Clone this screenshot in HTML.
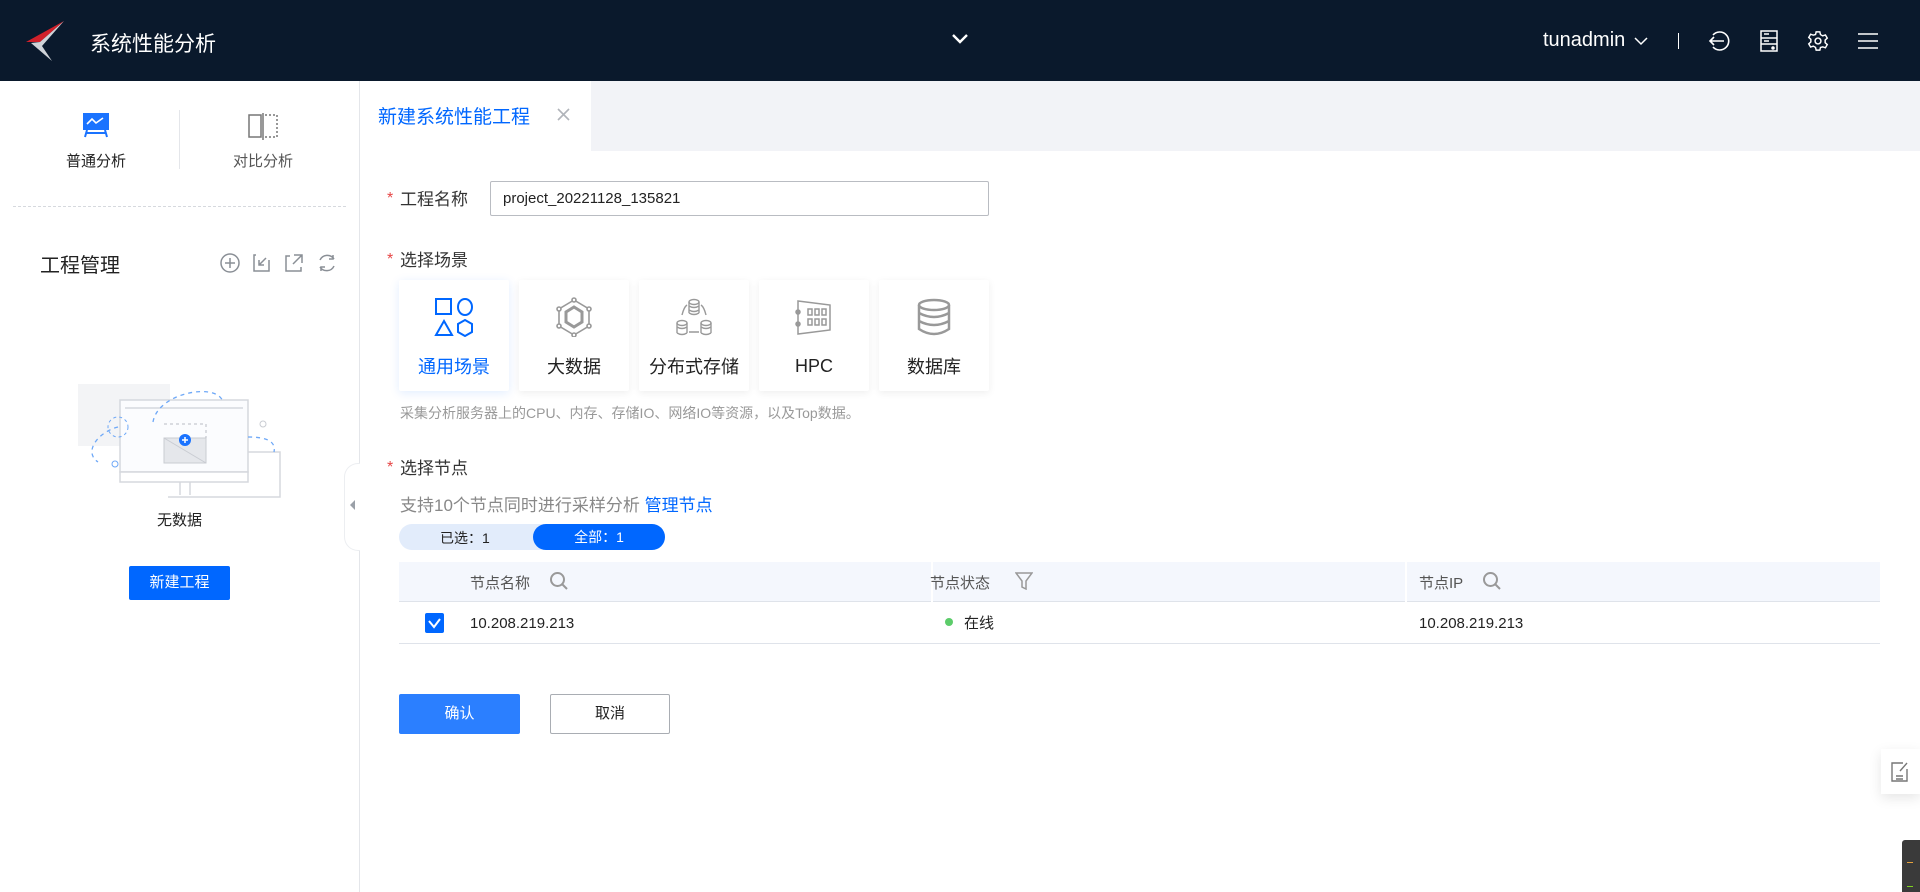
<!DOCTYPE html>
<html><head><meta charset="utf-8"><style>
*{margin:0;padding:0;box-sizing:border-box}
body{width:1920px;height:892px;position:relative;overflow:hidden;background:#fff;font-family:"Liberation Sans","Noto Sans CJK SC",sans-serif;color:#222}
.a{position:absolute}
.hd{left:0;top:0;width:1920px;height:81px;background:#0a192c}
.t{white-space:nowrap}
.card{position:absolute;top:280px;width:110px;height:111px;background:#fff;box-shadow:0 2px 8px rgba(0,0,0,0.07);border-radius:2px;text-align:center}
.card .lb{position:absolute;left:0;right:0;top:73px;font-size:18px;color:#222}
.card svg{position:absolute;left:35px;top:17px}
.star{color:#e64545;font-size:16px}
.lab{font-size:17px;color:#333}
.th{font-size:15px;color:#555}
</style></head><body>
<div class="a hd"></div>
<svg class="a" style="left:26px;top:20px" width="40" height="42" viewBox="0 0 40 42"><path d="M0 22 L38 1 L14 22 Z" fill="#d0202a"/><path d="M5 23 L14 22 L38 1 L16 26 L26 41 Z" fill="#cfd3d8"/></svg>
<div class="a t" style="left:90px;top:28px;font-size:21px;color:#fff">系统性能分析</div>
<svg class="a" style="left:951px;top:33px" width="18" height="12"><path d="M2 2 L9 9 L16 2" stroke="#fff" stroke-width="2.4" fill="none"/></svg>
<div class="a t" style="left:1543px;top:29px;font-size:20px;color:#fff">tunadmin</div>
<svg class="a" style="left:1634px;top:37px" width="14" height="9"><path d="M1 1 L7 7 L13 1" stroke="#fff" stroke-width="1.5" fill="none"/></svg>
<div class="a" style="left:1678px;top:33px;width:1px;height:16px;background:#fff"></div>
<svg class="a" style="left:1708px;top:30px" width="22" height="22" viewBox="0 0 22 22" fill="none" stroke="#fff" stroke-width="1.6"><path d="M5 5 A9 9 0 1 1 5 17"/><path d="M2 11 H16 M6 7 L2 11 L6 15"/></svg>
<svg class="a" style="left:1760px;top:30px" width="18" height="22" viewBox="0 0 18 22" fill="none" stroke="#fff" stroke-width="1.5"><rect x="1" y="1" width="16" height="20"/><path d="M1 8 H17 M1 14 H17 M4 4 H9 M4 11 H9"/><circle cx="13" cy="18" r="1" fill="#fff"/></svg>
<svg class="a" style="left:1807px;top:30px" width="22" height="22" viewBox="0 0 24 24" fill="none" stroke="#fff" stroke-width="1.6"><path d="M10 2h4l.7 3 2.4 1.4 3-1 2 3.5-2.3 2.1v2.8l2.3 2.1-2 3.5-3-1L14.7 19 14 22h-4l-.7-3-2.4-1.4-3 1-2-3.5 2.3-2.1v-2.8L1.9 8.1l2-3.5 3 1L9.3 5z"/><circle cx="12" cy="12" r="3.2"/></svg>
<svg class="a" style="left:1858px;top:32px" width="20" height="18" stroke="#fff" stroke-width="1.6"><path d="M0 2H20M0 9H20M0 16H20"/></svg>

<div class="a" style="left:359px;top:81px;width:1px;height:811px;background:#e4e6ea"></div>
<svg class="a" style="left:82px;top:112px" width="28" height="26" viewBox="0 0 28 26"><rect x="1" y="1" width="26" height="17" fill="#1a73ff"/><path d="M5 12 L10 7 L14 11 L21 6" stroke="#fff" stroke-width="1.6" fill="none"/><path d="M5 18 L3 25 M23 18 L25 25 M4 21 H24" stroke="#1a73ff" stroke-width="2"/></svg>
<div class="a t" style="left:66px;top:150px;font-size:15px;color:#222">普通分析</div>
<div class="a" style="left:179px;top:110px;width:1px;height:59px;background:#e4e6ea"></div>
<svg class="a" style="left:248px;top:112px" width="30" height="28" viewBox="0 0 30 28" fill="none" stroke="#777" stroke-width="1.5"><rect x="1" y="3" width="12" height="22"/><path d="M15 1 V28" /><path d="M17 3 H29 V25 H17" stroke-dasharray="2 2"/></svg>
<div class="a t" style="left:233px;top:150px;font-size:15px;color:#555">对比分析</div>
<div class="a" style="left:13px;top:206px;width:333px;border-top:1px dashed #d6d9de"></div>
<div class="a t" style="left:40px;top:249px;font-size:20px;color:#222">工程管理</div>
<svg class="a" style="left:220px;top:252px" width="120" height="22" viewBox="0 0 120 22" fill="none" stroke="#8a8f96" stroke-width="1.5"><circle cx="10" cy="11" r="9"/><path d="M10 6V16M5 11H15"/><path d="M36 3H34V19H49V8M46 6L39 13M39 8V13H44"/><path d="M70 4H66V19H81V15M74 3H82V11M82 3L73 12"/><path d="M100 8A8 8 0 0 1 114 7M114 14A8 8 0 0 1 100 15M113 3V7H109M101 19V15H105"/></svg>
<svg class="a" style="left:78px;top:382px" width="210" height="120" viewBox="0 0 210 120">
<rect x="0" y="2" width="92" height="62" fill="#f3f4f6"/>
<rect x="42" y="18" width="128" height="72" fill="#fbfcfe" stroke="#d5d8dd" stroke-width="1.5"/>
<path d="M47 26H165" stroke="#d5d8dd" stroke-width="1.5"/>
<rect x="42" y="90" width="128" height="10" fill="#fff" stroke="#d5d8dd" stroke-width="1.5"/>
<path d="M102 100V113M112 100V113M90 115H130M170 70H202V115H130" stroke="#d5d8dd" stroke-width="1.5" fill="none"/>
<rect x="86" y="56" width="42" height="25" fill="#e5e7eb" stroke="#c9ccd2"/>
<path d="M86 56L128 81" stroke="#c9ccd2"/>
<path d="M86 42H128V56" stroke="#b8bcc4" stroke-dasharray="3 3" fill="none"/>
<path d="M75 40C80 10 140 0 145 20M40 45C20 50 5 70 20 80M170 55C190 55 198 60 196 70" stroke="#6ea8f7" stroke-dasharray="4 4" fill="none" stroke-width="1.3"/>
<circle cx="40" cy="45" r="10" stroke="#6ea8f7" stroke-dasharray="3 3" fill="none"/>
<circle cx="37" cy="82" r="3" stroke="#6ea8f7" fill="#fff"/>
<circle cx="185" cy="42" r="3" stroke="#c9ccd2" fill="none"/>
<circle cx="107" cy="58" r="6" fill="#1a73ff"/><path d="M104 58H110M107 55V61" stroke="#fff" stroke-width="1.5"/>
</svg>
<div class="a t" style="left:157px;top:509px;font-size:15px;color:#222">无数据</div>
<div class="a" style="left:129px;top:566px;width:101px;height:34px;background:#0067ff;border-radius:2px;color:#fff;font-size:15px;text-align:center;line-height:34px">新建工程</div>
<div class="a" style="left:344px;top:463px;width:16px;height:88px;background:#fff;border-radius:14px 0 0 14px;border:1px solid #eceef1;border-right:none"></div>
<div class="a" style="left:350px;top:500px;width:0;height:0;border-top:5px solid transparent;border-bottom:5px solid transparent;border-right:5px solid #9aa0a8"></div>

<div class="a" style="left:591px;top:81px;width:1329px;height:70px;background:#f2f3f7"></div>
<div class="a t" style="left:378px;top:102px;font-size:19px;color:#0067ff">新建系统性能工程</div>
<svg class="a" style="left:557px;top:108px" width="13" height="13" stroke="#b0b4ba" stroke-width="1.6"><path d="M1 1L12 12M12 1L1 12"/></svg>

<div class="a t star" style="left:387px;top:190px">*</div>
<div class="a t lab" style="left:400px;top:185px">工程名称</div>
<div class="a" style="left:490px;top:181px;width:499px;height:35px;border:1px solid #b9bcc2;border-radius:2px;font-size:15px;line-height:33px;padding-left:12px;color:#222">project_20221128_135821</div>
<div class="a t star" style="left:387px;top:251px">*</div>
<div class="a t lab" style="left:400px;top:246px">选择场景</div>

<div class="card" style="left:399px;box-shadow:0 2px 10px rgba(0,103,255,0.12)">
<svg width="40" height="40" viewBox="0 0 40 40" fill="none" stroke="#0067ff" stroke-width="2"><rect x="2" y="2" width="15" height="15"/><ellipse cx="31" cy="10" rx="7" ry="8"/><path d="M10 24L18 38H2Z"/><path d="M31 23L38 27V35L31 39L24 35V27Z"/></svg>
<div class="lb" style="color:#0067ff">通用场景</div></div>
<div class="card" style="left:519px">
<svg width="40" height="40" viewBox="0 0 40 40" fill="none" stroke="#999" stroke-width="1.6"><path d="M20 3L35 12V29L20 38L5 29V12Z"/><path d="M20 10L28 15V25L20 30L12 25V15Z" stroke-width="3"/><circle cx="20" cy="3" r="2" fill="#fff"/><circle cx="35" cy="12" r="2" fill="#fff"/><circle cx="35" cy="29" r="2" fill="#fff"/><circle cx="20" cy="38" r="2" fill="#fff"/><circle cx="5" cy="29" r="2" fill="#fff"/><circle cx="5" cy="12" r="2" fill="#fff"/></svg>
<div class="lb">大数据</div></div>
<div class="card" style="left:639px">
<svg width="40" height="40" viewBox="0 0 40 40" fill="none" stroke="#999" stroke-width="1.4"><ellipse cx="20" cy="5" rx="5" ry="2.5"/><path d="M15 5V16M25 5V16M15 9Q20 12 25 9M15 13Q20 16 25 13M15 16Q20 19 25 16"/><ellipse cx="8" cy="26" rx="5" ry="2.5"/><path d="M3 26V36M13 26V36M3 30Q8 33 13 30M3 36Q8 39 13 36"/><ellipse cx="32" cy="26" rx="5" ry="2.5"/><path d="M27 26V36M37 26V36M27 30Q32 33 37 30M27 36Q32 39 37 36"/><path d="M8 18Q10 10 13 8M32 18Q30 10 27 8M15 35H25"/></svg>
<div class="lb">分布式存储</div></div>
<div class="card" style="left:759px">
<svg width="40" height="40" viewBox="0 0 40 40" fill="none" stroke="#999" stroke-width="1.5"><path d="M4 4L36 8V33L4 37Z"/><circle cx="4" cy="15" r="2" fill="#999"/><circle cx="4" cy="27" r="2" fill="#999"/><rect x="14" y="12" width="4" height="6"/><rect x="21" y="12" width="4" height="6"/><rect x="28" y="12" width="4" height="6"/><rect x="14" y="22" width="4" height="6"/><rect x="21" y="22" width="4" height="6"/><rect x="28" y="22" width="4" height="6"/></svg>
<div class="lb" style="top:76px">HPC</div></div>
<div class="card" style="left:879px">
<svg width="40" height="40" viewBox="0 0 40 40" fill="none" stroke="#999" stroke-width="2.5"><ellipse cx="20" cy="8" rx="15" ry="5"/><path d="M5 8V32Q20 42 35 32V8M5 16Q20 24 35 16M5 24Q20 32 35 24"/></svg>
<div class="lb">数据库</div></div>

<div class="a t" style="left:400px;top:403px;font-size:14px;color:#999">采集分析服务器上的CPU、内存、存储IO、网络IO等资源，以及Top数据。</div>
<div class="a t star" style="left:387px;top:459px">*</div>
<div class="a t lab" style="left:400px;top:454px">选择节点</div>
<div class="a t" style="left:400px;top:491px;font-size:17px;color:#888">支持10个节点同时进行采样分析 <span style="color:#0067ff">管理节点</span></div>
<div class="a" style="left:399px;top:524px;width:266px;height:26px;background:#e2ecfb;border-radius:13px"></div>
<div class="a t" style="left:440px;top:528px;font-size:14px;color:#222">已选：1</div>
<div class="a" style="left:533px;top:524px;width:132px;height:26px;background:#0067ff;border-radius:13px;color:#fff;font-size:14px;text-align:center;line-height:26px">全部：1</div>

<div class="a" style="left:399px;top:562px;width:1481px;height:40px;background:#f4f7fd;border-bottom:1px solid #dfe3ea"></div>
<div class="a" style="left:931px;top:562px;width:2px;height:40px;background:#fff"></div>
<div class="a" style="left:1405px;top:562px;width:2px;height:40px;background:#fff"></div>
<div class="a t th" style="left:470px;top:572px">节点名称</div>
<svg class="a" style="left:549px;top:571px" width="20" height="20" fill="none" stroke="#999" stroke-width="2"><circle cx="8.5" cy="8.5" r="6.5"/><path d="M13 13L18 18"/></svg>
<div class="a t th" style="left:930px;top:572px">节点状态</div>
<svg class="a" style="left:1015px;top:572px" width="18" height="18" fill="none" stroke="#999" stroke-width="1.5"><path d="M1 1H17L11 9V17L7 15V9Z"/></svg>
<div class="a t th" style="left:1419px;top:572px">节点IP</div>
<svg class="a" style="left:1482px;top:571px" width="20" height="20" fill="none" stroke="#999" stroke-width="2"><circle cx="8.5" cy="8.5" r="6.5"/><path d="M13 13L18 18"/></svg>

<div class="a" style="left:425px;top:613px;width:19px;height:20px;background:#0067ff;border-radius:2px"></div>
<svg class="a" style="left:428px;top:617px" width="13" height="12" fill="none" stroke="#fff" stroke-width="2"><path d="M1 4L6 10L12 2"/></svg>
<div class="a t" style="left:470px;top:615px;font-size:15px;color:#222">10.208.219.213</div>
<div class="a" style="left:945px;top:618px;width:8px;height:8px;border-radius:50%;background:#5ccc6a"></div>
<div class="a t" style="left:964px;top:612px;font-size:15px;color:#222">在线</div>
<div class="a t" style="left:1419px;top:615px;font-size:15px;color:#222">10.208.219.213</div>
<div class="a" style="left:399px;top:643px;width:1481px;height:1px;background:#dfe3ea"></div>

<div class="a" style="left:399px;top:694px;width:121px;height:40px;background:#2b7fff;border-radius:2px;color:#fff;font-size:15px;text-align:center;line-height:40px">确认</div>
<div class="a" style="left:550px;top:694px;width:120px;height:40px;border:1px solid #a9adb3;border-radius:2px;color:#222;font-size:15px;text-align:center;line-height:38px">取消</div>

<div class="a" style="left:1881px;top:749px;width:39px;height:45px;background:#fff;box-shadow:0 4px 12px rgba(0,0,0,0.1)"></div>
<svg class="a" style="left:1891px;top:762px" width="18" height="20" fill="none" stroke="#777" stroke-width="1.4"><path d="M12 1H1V19H16V7M16 1L9 9M5 14H12M5 17H12"/></svg>
<div class="a" style="left:1902px;top:840px;width:18px;height:52px;background:#3a3a3a;border-radius:3px 0 0 0"></div>
<div class="a" style="left:1907px;top:862px;width:6px;height:1px;background:#e6a23c"></div>
<div class="a" style="left:1907px;top:886px;width:6px;height:1px;background:#7ed321"></div>
</body></html>
